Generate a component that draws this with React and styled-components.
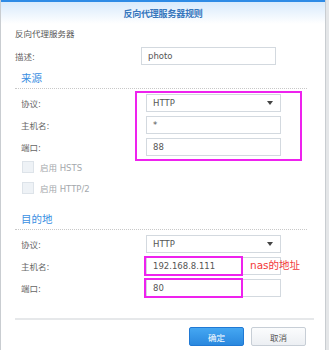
import React from "react";
import styled, { createGlobalStyle } from "styled-components";

const GlobalStyle = createGlobalStyle`
  html, body {
    margin: 0;
    padding: 0;
    background: #e4e6e8;
  }
  body {
    font-family: "DejaVu Sans", "Noto Sans CJK SC", sans-serif;
  }
`;

const Dialog = styled.div`
  position: relative;
  width: 324px;
  height: 350px;
  background: #ffffff;
  border-left: 1px solid #c9cdd1;
  border-right: 1px solid #c9cdd1;
  overflow: hidden;
`;

const Header = styled.div`
  height: 22px;
  border-top: 2px solid #2e8be6;
  background: linear-gradient(to bottom, #d8eafc, #ffffff);
  display: flex;
  align-items: center;
  justify-content: center;
  font-size: 9px;
  font-weight: bold;
  color: #3777bd;
  letter-spacing: -0.2px;
`;

const Body = styled.div`
  padding-left: 14px;
  display: flex;
  flex-direction: column;
`;

const Caption = styled.div`
  margin-top: 5px;
  height: 10px;
  line-height: 10px;
  font-size: 8.5px;
  color: #555;
`;

const Row = styled.div`
  display: grid;
  grid-template-columns: ${({ $label }) => $label}px 135px;
  align-items: center;
  height: 18px;
  padding-left: ${({ $indent }) => $indent || 0}px;
  margin-top: ${({ $top }) => $top || 0}px;
`;

const Label = styled.span`
  font-size: 8.5px;
  color: #666;
`;

const Input = styled.div`
  box-sizing: border-box;
  height: 18px;
  border: 1px solid #d3d9df;
  background: #fff;
  display: flex;
  align-items: center;
  padding-left: 6px;
  font-size: 8.5px;
  color: #555;
`;

const Select = styled(Input)`
  justify-content: space-between;
  padding-right: 7px;
  &::after {
    content: "";
    border-left: 3.5px solid transparent;
    border-right: 3.5px solid transparent;
    border-top: 4px solid #444;
  }
`;

const SectionTitle = styled.div`
  margin-top: ${({ $top }) => $top}px;
  height: 14px;
  line-height: 14px;
  padding-left: 6px;
  font-size: 10.5px;
  color: #3a8fe2;
`;

const Dotted = styled.div`
  margin-top: 3px;
  width: 292px;
  border-top: 1px dotted #c8c8c8;
`;

const Fields = styled.div`
  margin-top: 5px;
  display: flex;
  flex-direction: column;
  gap: 4px;
`;

const Checks = styled.div`
  margin-top: 5px;
  padding-left: 7px;
  display: flex;
  flex-direction: column;
  gap: 9px;
`;

const CheckRow = styled.label`
  display: flex;
  align-items: center;
  gap: 6px;
  height: 12px;
  font-size: 8.5px;
  color: #a4a8ac;
`;

const Box = styled.span`
  box-sizing: border-box;
  width: 12px;
  height: 12px;
  background: #eef2f6;
  border: 1px solid #dde3e9;
`;

const Separator = styled.div`
  margin-top: 21px;
  width: 299px;
  border-top: 2px solid #e6e8ea;
`;

const Footer = styled.div`
  margin-top: 7px;
  padding-right: 19px;
  display: flex;
  justify-content: flex-end;
  gap: 7px;
`;

const Button = styled.button`
  box-sizing: border-box;
  width: 55px;
  height: 19px;
  border-radius: 2px;
  font-family: inherit;
  font-size: 8.5px;
  padding: 0;
  border: 1px solid ${({ $primary }) => ($primary ? "#2079d4" : "#c7ced6")};
  color: ${({ $primary }) => ($primary ? "#ffffff" : "#555")};
  background: ${({ $primary }) =>
    $primary
      ? "linear-gradient(to bottom, #45a7f2, #2a88de)"
      : "linear-gradient(to bottom, #fbfcfd, #eceff3)"};
`;

const Mark = styled.div`
  position: absolute;
  left: ${({ $x }) => $x}px;
  top: ${({ $y }) => $y}px;
  width: ${({ $w }) => $w}px;
  height: ${({ $h }) => $h}px;
  box-sizing: border-box;
  border: 2px solid #ee22ee;
  pointer-events: none;
`;

const Note = styled.div`
  position: absolute;
  left: 249px;
  top: 258px;
  font-size: 10.5px;
  color: #f23a3a;
  line-height: 14px;
`;

export default function App() {
  return (
    <>
      <GlobalStyle />
      <Dialog>
        <Header>反向代理服务器规则</Header>
        <Body>
          <Caption>反向代理服务器</Caption>
          <Row $label={126} $top={8}>
            <Label>描述:</Label>
            <Input>photo</Input>
          </Row>

          <SectionTitle $top={6}>来源</SectionTitle>
          <Dotted />
          <Fields>
            <Row $label={125} $indent={6}>
              <Label>协议:</Label>
              <Select>HTTP</Select>
            </Row>
            <Row $label={125} $indent={6}>
              <Label>主机名:</Label>
              <Input>*</Input>
            </Row>
            <Row $label={125} $indent={6}>
              <Label>端口:</Label>
              <Input>88</Input>
            </Row>
          </Fields>
          <Checks>
            <CheckRow>
              <Box />
              启用 HSTS
            </CheckRow>
            <CheckRow>
              <Box />
              启用 HTTP/2
            </CheckRow>
          </Checks>

          <SectionTitle $top={18}>目的地</SectionTitle>
          <Dotted />
          <Fields>
            <Row $label={125} $indent={6}>
              <Label>协议:</Label>
              <Select>HTTP</Select>
            </Row>
            <Row $label={125} $indent={6}>
              <Label>主机名:</Label>
              <Input>192.168.8.111</Input>
            </Row>
            <Row $label={125} $indent={6}>
              <Label>端口:</Label>
              <Input>80</Input>
            </Row>
          </Fields>

          <Separator />
          <Footer>
            <Button $primary>确定</Button>
            <Button>取消</Button>
          </Footer>
        </Body>

        <Mark $x={134} $y={91} $w={167} $h={70} />
        <Mark $x={143} $y={256} $w={99} $h={20} />
        <Mark $x={143} $y={278} $w={99} $h={20} />
        <Note>nas的地址</Note>
      </Dialog>
    </>
  );
}
